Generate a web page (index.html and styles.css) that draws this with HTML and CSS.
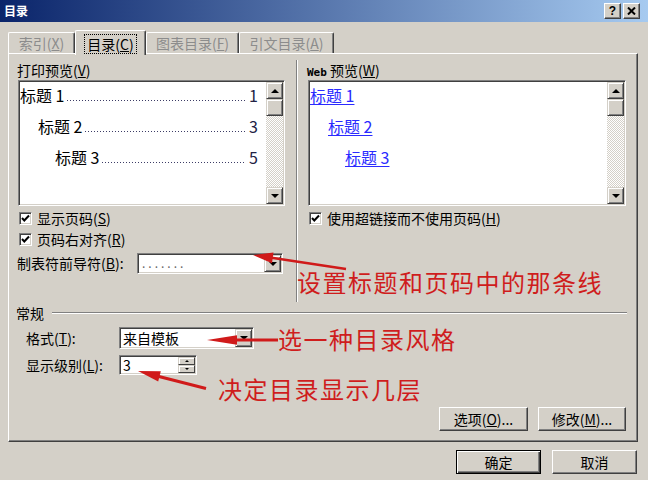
FILE: index.html
```html
<!DOCTYPE html>
<html lang="zh">
<head>
<meta charset="utf-8">
<title>目录</title>
<link rel="stylesheet" href="styles.css">
</head>
<body>
<div class="dialog">
  <div class="titlebar">
    <span class="title">目录</span>
    <div class="tb-buttons">
      <span class="tb-btn">?</span>
      <span class="tb-btn"><svg width="9" height="8" viewBox="0 0 9 8"><path d="M1 0.5 L8 7.5 M8 0.5 L1 7.5" stroke="#000" stroke-width="2"/></svg></span>
    </div>
  </div>

  <div class="tabs">
    <div class="tab t1">索引(<u>X</u>)</div>
    <div class="tab active"><span class="focus">目录(<u>C</u>)</span></div>
    <div class="tab t3">图表目录(<u>F</u>)</div>
    <div class="tab t4">引文目录(<u>A</u>)</div>
  </div>

  <div class="panel">
    <div class="top">
      <div class="col left">
        <div class="label">打印预览(<u>V</u>)</div>
        <div class="listbox">
          <div class="items">
            <div class="toc"><span>标题 1</span><span class="dots"></span><span class="num">1</span></div>
            <div class="toc l2"><span>标题 2</span><span class="dots"></span><span class="num">3</span></div>
            <div class="toc l3"><span>标题 3</span><span class="dots"></span><span class="num">5</span></div>
          </div>
          <div class="scrollbar">
            <span class="sb-btn"><span class="arr-up"></span></span>
            <span class="sb-thumb"></span>
            <span class="sb-btn down"><span class="arr-down"></span></span>
          </div>
        </div>
        <div class="checks">
          <div class="check-row"><span class="checkbox"><svg width="11" height="11" viewBox="0 0 11 11"><path d="M2 5 L4.3 7.5 L9 2.5" fill="none" stroke="#000" stroke-width="2"/></svg></span>显示页码(<u>S</u>)</div>
          <div class="check-row"><span class="checkbox"><svg width="11" height="11" viewBox="0 0 11 11"><path d="M2 5 L4.3 7.5 L9 2.5" fill="none" stroke="#000" stroke-width="2"/></svg></span>页码右对齐(<u>R</u>)</div>
        </div>
        <div class="field-row">
          <span class="field-label">制表符前导符(<u>B</u>):</span>
          <div class="combo leader"><span class="combo-text dotted">.......</span><span class="drop"><span class="arr-down"></span></span></div>
        </div>
      </div>
      <div class="vsep"></div>
      <div class="col right">
        <div class="label"><span class="mono">Web</span> 预览(<u>W</u>)</div>
        <div class="listbox">
          <div class="items">
            <div class="web-item"><span>标题 1</span></div>
            <div class="web-item l2"><span>标题 2</span></div>
            <div class="web-item l3"><span>标题 3</span></div>
          </div>
          <div class="scrollbar">
            <span class="sb-btn"><span class="arr-up"></span></span>
            <span class="sb-thumb"></span>
            <span class="sb-btn down"><span class="arr-down"></span></span>
          </div>
        </div>
        <div class="checks">
          <div class="check-row"><span class="checkbox"><svg width="11" height="11" viewBox="0 0 11 11"><path d="M2 5 L4.3 7.5 L9 2.5" fill="none" stroke="#000" stroke-width="2"/></svg></span>使用超链接而不使用页码(<u>H</u>)</div>
        </div>
      </div>
    </div>

    <div class="group-head"><span>常规</span><span class="hline"></span></div>
    <div class="form-row r1">
      <span class="form-label">格式(<u>T</u>):</span>
      <div class="combo fmt"><span class="combo-text">来自模板</span><span class="drop"><span class="arr-down"></span></span></div>
    </div>
    <div class="form-row r2">
      <span class="form-label">显示级别(<u>L</u>):</span>
      <div class="spin"><span class="combo-text">3</span><span class="spin-btns"><span class="spin-btn"><span class="arr-up sm"></span></span><span class="spin-btn"><span class="arr-down sm"></span></span></span></div>
    </div>
    <div class="btn-row">
      <button class="btn w89">选项(<u>O</u>)...</button>
      <button class="btn w88">修改(<u>M</u>)...</button>
    </div>
  </div>

  <div class="footer">
    <button class="btn default">确定</button>
    <button class="btn">取消</button>
  </div>

  <svg class="arrows" width="648" height="480" viewBox="0 0 648 480">
    <line x1="346" y1="269" x2="270" y2="257.5" stroke="#d01a1a" stroke-width="2.5"/>
    <polygon points="253,255 273.5,252.6 272,263.2" fill="#d01a1a"/>
    <line x1="278" y1="340" x2="232" y2="340" stroke="#d01a1a" stroke-width="3"/>
    <polygon points="207,340 237,335.2 237,344.8" fill="#d01a1a"/>
    <line x1="206" y1="388.5" x2="155" y2="375.5" stroke="#d01a1a" stroke-width="3"/>
    <polygon points="138,371 160.8,371.3 158.2,381.6" fill="#d01a1a"/>
  </svg>
  <div class="note n1">设置标题和页码中的那条线</div>
  <div class="note n2">选一种目录风格</div>
  <div class="note n3">决定目录显示几层</div>
</div>
</body>
</html>
```

FILE: styles.css
```css
* { box-sizing: border-box; }

body {
  margin: 0;
  background: #d4d0c8;
  font-family: "Noto Sans CJK SC", "Noto Sans", sans-serif;
  font-size: 14px;
  line-height: 1.2;
  color: #000;
}

u { text-decoration: underline; text-underline-offset: 1px; }

.dialog {
  position: relative;
  width: 648px;
  height: 480px;
  overflow: hidden;
}

/* title bar */
.titlebar {
  height: 22px;
  background: linear-gradient(to right, #0a246a 0%, #a6caf0 100%);
  display: flex;
  align-items: center;
  justify-content: space-between;
  padding: 0 8px 0 4px;
}
.title {
  color: #fff;
  font-weight: bold;
  font-size: 12px;
  line-height: 14px;
}
.tb-buttons { display: flex; gap: 2px; }
.tb-btn {
  width: 17px;
  height: 16px;
  background: #d4d0c8;
  border: 1px solid;
  border-color: #fff #404040 #404040 #fff;
  box-shadow: inset -1px -1px #808080;
  display: flex;
  align-items: center;
  justify-content: center;
  font: bold 12px "Liberation Sans", sans-serif;
  line-height: 1;
}

/* tabs */
.tabs {
  height: 31px;
  display: flex;
  align-items: flex-end;
  padding-left: 8px;
}
.tab {
  height: 21px;
  border-top: 1px solid #fff;
  border-left: 1px solid #fff;
  border-right: 1px solid #404040;
  box-shadow: inset -1px 0 #808080;
  border-radius: 2px 2px 0 0;
  color: #8c8c8c;
  display: flex;
  align-items: center;
  justify-content: center;
  line-height: 16px;
}
.t1 { width: 67px; }
.t3 { width: 93px; }
.t4 { width: 95px; }
.tab.active {
  width: 71px;
  height: 25px;
  margin-bottom: -2px;
  padding: 3px 0 1px;
  position: relative;
  z-index: 1;
  background: #d4d0c8;
  color: #000;
}
.focus {
  outline: 1px dotted #000;
  padding: 1px 2px;
  line-height: 16px;
}

/* panel */
.panel {
  margin-left: 8px;
  width: 630px;
  height: 389px;
  border: 1px solid;
  border-color: #fff #404040 #404040 #fff;
  box-shadow: inset -1px -1px #808080;
}
.top {
  display: flex;
  height: 248px;
  padding-left: 9px;
}
.col {
  padding-top: 8px;
  display: flex;
  flex-direction: column;
}
.col.left { width: 267px; }
.col.right { width: 318px; }
.label {
  height: 16px;
  line-height: 16px;
  margin-left: -1px;
}
.mono {
  font-family: "DejaVu Sans Mono", monospace;
  font-size: 11px;
  font-weight: bold;
}
.vsep {
  width: 2px;
  margin: 6px 10px 0 11px;
  border-left: 1px solid #808080;
  border-right: 1px solid #fff;
}

.listbox {
  margin-top: 2px;
  height: 126px;
  display: flex;
  background: #fff;
  border: 1px solid;
  border-color: #808080 #fff #fff #808080;
  box-shadow: inset 1px 1px #404040, inset -1px -1px #d4d0c8;
  padding: 1px;
}
.items { flex: 1; }
.toc {
  height: 31px;
  line-height: 26px;
  font-size: 16px;
  display: flex;
  padding-right: 8px;
  white-space: nowrap;
}
.toc.l2, .web-item.l2 { padding-left: 18px; }
.toc.l3, .web-item.l3 { padding-left: 35px; }
.dots {
  flex: 1;
  margin: 0 3px;
  background-image: linear-gradient(to right, #3c3c66 1px, transparent 1px);
  background-size: 3px 1px;
  background-position: 0 18px;
  background-repeat: repeat-x;
}
.num { color: #222244; }
.web-item {
  height: 31px;
  line-height: 26px;
  font-size: 16px;
  color: #2a2aff;
}
.web-item span {
  text-decoration: underline;
  text-underline-offset: 2px;
}

.scrollbar {
  width: 17px;
  display: flex;
  flex-direction: column;
  background-color: #fff;
  background-image: repeating-conic-gradient(#d4d0c8 0 25%, #fff 0 50%);
  background-size: 2px 2px;
}
.sb-btn, .sb-thumb {
  width: 17px;
  height: 17px;
  background: #d4d0c8;
  border: 1px solid;
  border-color: #d4d0c8 #404040 #404040 #d4d0c8;
  box-shadow: inset 1px 1px #fff, inset -1px -1px #808080;
  display: flex;
  align-items: center;
  justify-content: center;
}
.sb-btn.down { margin-top: auto; }
.arr-up {
  width: 0; height: 0;
  border-left: 4px solid transparent;
  border-right: 4px solid transparent;
  border-bottom: 4px solid #000;
}
.arr-down {
  width: 0; height: 0;
  border-left: 4px solid transparent;
  border-right: 4px solid transparent;
  border-top: 4px solid #000;
}
.arr-up.sm { border-left-width: 2px; border-right-width: 2px; border-bottom-width: 2px; }
.arr-down.sm { border-left-width: 2px; border-right-width: 2px; border-top-width: 2px; }

.checks { margin-top: 2px; }
.check-row {
  height: 21px;
  display: flex;
  align-items: center;
  white-space: nowrap;
}
.checkbox {
  width: 13px;
  height: 13px;
  margin-left: 1px;
  margin-right: 5px;
  background: #fff;
  border: 1px solid;
  border-color: #808080 #fff #fff #808080;
  box-shadow: inset 1px 1px #404040, inset -1px -1px #d4d0c8;
  display: flex;
  align-items: center;
  justify-content: center;
}

.field-row {
  margin-top: 3px;
  height: 21px;
  display: flex;
  align-items: center;
}
.field-label { width: 120px; margin-left: -1px; white-space: nowrap; }

.combo, .spin {
  display: flex;
  background: #fff;
  border: 1px solid;
  border-color: #808080 #fff #fff #808080;
  box-shadow: inset 1px 1px #404040, inset -1px -1px #d4d0c8;
  padding: 1px;
}
.combo.leader { width: 146px; height: 21px; }
.combo.fmt { width: 135px; height: 22px; }
.spin { width: 78px; height: 20px; }
.combo-text {
  flex: 1;
  padding-left: 2px;
  display: flex;
  align-items: center;
  white-space: nowrap;
}
.combo-text.dotted {
  color: #666;
  font-size: 12px;
  letter-spacing: 3px;
  padding-left: 3px;
}
.drop {
  width: 17px;
  background: #d4d0c8;
  border: 1px solid;
  border-color: #d4d0c8 #404040 #404040 #d4d0c8;
  box-shadow: inset 1px 1px #fff, inset -1px -1px #808080;
  display: flex;
  align-items: center;
  justify-content: center;
}
.spin-btns {
  width: 17px;
  display: flex;
  flex-direction: column;
}
.spin-btn {
  flex: 1;
  background: #d4d0c8;
  border: 1px solid;
  border-color: #d4d0c8 #404040 #404040 #d4d0c8;
  box-shadow: inset 1px 1px #fff;
  display: flex;
  align-items: center;
  justify-content: center;
}

/* general group */
.group-head {
  margin-top: 1px;
  height: 20px;
  display: flex;
  align-items: center;
  padding-left: 7px;
  padding-right: 10px;
}
.hline {
  flex: 1;
  margin-left: 8px;
  height: 2px;
  border-top: 1px solid #808080;
  border-bottom: 1px solid #fff;
}
.form-row {
  display: flex;
  align-items: center;
  padding-left: 17px;
}
.form-row.r1 { margin-top: 4px; }
.form-row.r2 { margin-top: 6px; }
.form-label { width: 93px; white-space: nowrap; }

.btn-row {
  margin-top: 32px;
  display: flex;
  justify-content: flex-end;
  gap: 10px;
  padding-right: 11px;
}

.btn {
  height: 24px;
  padding: 0;
  background: #d4d0c8;
  border: 1px solid;
  border-color: #fff #404040 #404040 #fff;
  box-shadow: inset -1px -1px #808080;
  font-family: "Noto Sans CJK SC", sans-serif;
  font-size: 14px;
  line-height: 20px;
  color: #000;
}
.w89 { width: 89px; }
.w88 { width: 88px; }

.footer {
  margin-top: 8px;
  display: flex;
  justify-content: flex-end;
  gap: 11px;
  padding-right: 11px;
}
.footer .btn { width: 85px; }
.btn.default {
  border: 1px solid #000;
  box-shadow: inset 1px 1px #fff, inset -1px -1px #404040, inset -2px -2px #808080;
}

/* annotations overlay */
.arrows {
  position: absolute;
  left: 0;
  top: 0;
  pointer-events: none;
}
.note {
  position: absolute;
  color: #cf1d1d;
  font-size: 24px;
  line-height: 26px;
  letter-spacing: 1.5px;
  white-space: nowrap;
}
.n1 { left: 297px; top: 269px; }
.n2 { left: 278px; top: 326px; }
.n3 { left: 218px; top: 376px; }
```
